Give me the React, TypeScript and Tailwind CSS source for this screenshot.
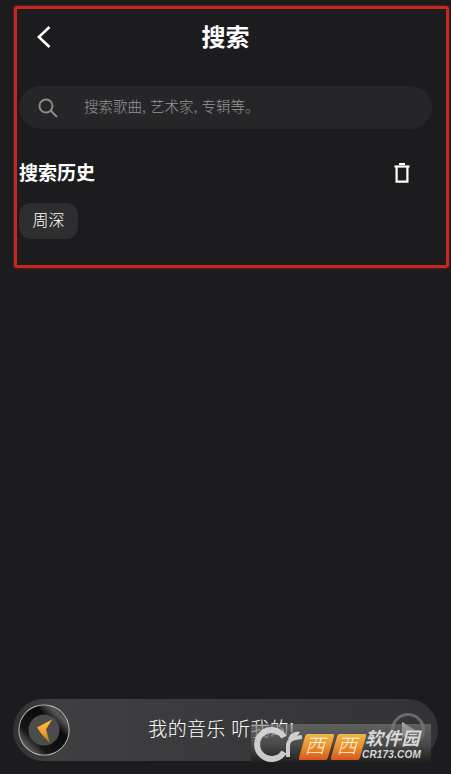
import React from "react";

const font = { fontFamily: '"Liberation Sans","Noto Sans CJK SC",sans-serif' };

function Disc() {
  return (
    <svg width="52" height="52" viewBox="0 0 52 52" className="shrink-0">
      <defs>
        <linearGradient id="sheen" x1="0.12" y1="0.88" x2="0.88" y2="0.12">
          <stop offset="0" stopColor="#6a6a6a" />
          <stop offset="0.24" stopColor="#161616" />
          <stop offset="0.7" stopColor="#0a0a0a" />
          <stop offset="0.9" stopColor="#5a5a5a" />
          <stop offset="1" stopColor="#333" />
        </linearGradient>
        <linearGradient id="flame" x1="0.6" y1="0" x2="0.6" y2="1">
          <stop offset="0" stopColor="#ffc23c" />
          <stop offset="0.55" stopColor="#f0a02a" />
          <stop offset="1" stopColor="#a86a1c" />
        </linearGradient>
      </defs>
      <circle cx="26" cy="26" r="25.6" fill="#c4c4c4" />
      <circle cx="26" cy="26" r="24.7" fill="url(#sheen)" />
      <circle cx="26" cy="26" r="15.5" fill="#4c4c4c" />
      <path d="M19 23.5 L34 15.5 L28 25.5 L32 39.5 L23.5 30 Z" fill="url(#flame)" />
    </svg>
  );
}

function WatermarkTile() {
  return (
    <span className="w-[29px] h-[26px] bg-gradient-to-b from-[#efb648] via-[#e8902c] to-[#d9561c] -skew-x-[16deg] rounded-[2px] text-[#fff4e0] text-[20px] leading-[25px] text-center font-light">
      西
    </span>
  );
}

function Watermark() {
  return (
    <div className="absolute left-[251px] top-[724px] w-[180px] h-[39px] bg-gradient-to-b from-[#7c7c7c]/60 via-[#555555]/70 to-[#1e1e1e]/90 flex items-center">
      <svg width="53" height="39" viewBox="0 0 53 39" className="shrink-0 opacity-90">
        <path d="M33 13 A14.5 14.5 0 1 0 33 28" fill="none" stroke="#dcdcdc" strokeWidth="6" />
        <path d="M37 33 V22 C37 16 41 14 51 13" fill="none" stroke="#dcdcdc" strokeWidth="4" />
        <path d="M37 15 C39 9 44 7 49 8 C47 12 43 15 37 15 Z" fill="#dcdcdc" />
      </svg>
      <div className="flex gap-[3px] ml-[-2px] mt-[6px]">
        <WatermarkTile />
        <WatermarkTile />
      </div>
      <div className="ml-[2px] mt-[3px] flex flex-col items-start text-[#d8d8d8]">
        <span className="text-[18px] leading-[19px] font-bold italic tracking-[0.3px]">软件园</span>
        <span className="text-[10px] leading-[11px] font-bold italic tracking-[0.2px] ml-[-3px]">CR173.COM</span>
      </div>
    </div>
  );
}

export default function App() {
  return (
    <div style={font} className="relative w-[451px] h-[774px] overflow-hidden bg-[#1c1c1e] text-white flex flex-col">
      <header className="relative h-[50px] mt-[13px] flex items-center justify-center">
        <svg width="14" height="22" viewBox="0 0 14 22" className="absolute left-[37px] top-[13px]" fill="none" stroke="#fff" strokeWidth="2.6">
          <path d="M12.5 1 L1.8 11 L12.5 21" />
        </svg>
        <h1 className="text-[24px] leading-[30px] font-bold">搜索</h1>
      </header>

      <div className="mx-[19px] w-[413px] h-[43px] mt-[23px] rounded-full bg-[#262628] flex items-center pl-[19px]">
        <svg width="20" height="20" viewBox="0 0 20 20" fill="none" stroke="#8b8b8b" strokeWidth="2" className="shrink-0">
          <circle cx="8" cy="8" r="6.5" />
          <path d="M12.8 12.8 L19 19" />
        </svg>
        <span className="ml-[26px] text-[14.5px] text-[#969698] font-light">搜索歌曲, 艺术家, 专辑等。</span>
      </div>

      <div className="mt-[31px] pl-[19px] pr-[41px] flex items-center justify-between h-[28px]">
        <h2 className="text-[19px] font-bold">搜索历史</h2>
        <svg width="16" height="20" viewBox="0 0 16 20" fill="none" stroke="#fff" strokeWidth="2.2" className="-translate-y-px">
          <path d="M0.5 3.5 H15.5" />
          <path d="M5 1 H11" />
          <path d="M2.6 4 V18.6 H13.4 V4" />
        </svg>
      </div>

      <div className="mt-[15px] ml-[19px] w-[59px] h-[36px] rounded-[12px] bg-[#2e2e30] flex items-center justify-center text-[16px] text-white font-light">
        周深
      </div>

      <div className="mt-auto mb-[13px] ml-[13px] w-[425px] h-[62px] rounded-full bg-gradient-to-r from-[#313133] via-[#3f3f41] via-10% to-[#333335] flex items-center pl-[5px] pr-[13px]">
        <Disc />
        <span className="flex-1 text-center text-[19px] tracking-[0.3px] text-white pr-[18px] pt-[1px] font-light">我的音乐 听我的!</span>
        <span className="w-[34px] h-[34px] rounded-full border-[3px] border-[#6a6a6c] flex items-center justify-center shrink-0">
          <svg width="16" height="18" viewBox="0 0 16 18"><path d="M2 1 L15 9 L2 17 Z" fill="#c8c8ca" /></svg>
        </span>
      </div>

      <div className="absolute left-[14px] top-[6px] w-[435px] h-[262px] border-[3px] border-[#c5281f] rounded-[3px] shadow-[0_0_2px_#c5281f] pointer-events-none" />
      <Watermark />
    </div>
  );
}
